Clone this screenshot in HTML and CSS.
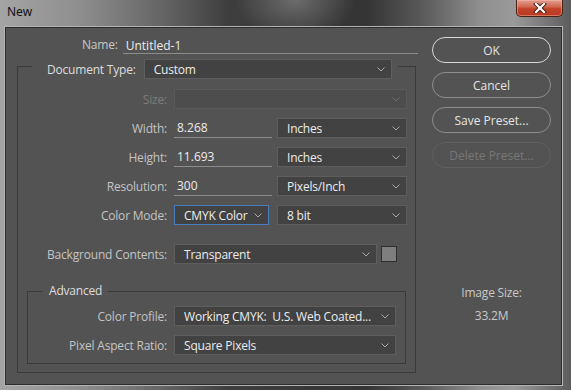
FILE: index.html
```html
<!DOCTYPE html>
<html lang="en">
<head>
    <meta charset="UTF-8">
    <meta name="viewport" content="width=device-width, initial-scale=1.0">
    <title>New</title>
    <link rel="stylesheet" href="styles.css">
</head>
<body>
    <div class="titlebar">
        <span class="title">New</span>
        <button class="close" aria-label="Close">
            <svg width="14" height="10" viewBox="0 0 14 10">
                <path d="M3 1 L11 9 M11 1 L3 9" stroke="#3a1a12" stroke-width="4" stroke-linecap="square"/>
                <path d="M3 1 L11 9 M11 1 L3 9" stroke="#ffffff" stroke-width="2.2" stroke-linecap="square"/>
            </svg>
        </button>
    </div>

    <div class="panel">
        <div class="main">
            <div class="name-row">
                <label for="name">Name:</label>
                <input type="text" id="name" value="Untitled-1">
            </div>

            <fieldset class="group">
                <legend class="group-head">
                    <span class="head-label">Document Type:</span>
                    <div class="dropdown doc-type"><span>Custom</span><svg class="chev" width="8" height="5" viewBox="0 0 8 5"><path d="M0.5 0.5 L4 4 L7.5 0.5" /></svg></div>
                </legend>

                <div class="row">
                    <span class="label disabled">Size:</span>
                    <div class="dropdown wide is-disabled"><span></span><svg class="chev" width="8" height="5" viewBox="0 0 8 5"><path d="M0.5 0.5 L4 4 L7.5 0.5" /></svg></div>
                </div>

                <div class="row">
                    <label class="label" for="width">Width:</label>
                    <input type="text" class="field" id="width" value="8.268">
                    <div class="dropdown unit"><span>Inches</span><svg class="chev" width="8" height="5" viewBox="0 0 8 5"><path d="M0.5 0.5 L4 4 L7.5 0.5" /></svg></div>
                </div>

                <div class="row">
                    <label class="label" for="height">Height:</label>
                    <input type="text" class="field" id="height" value="11.693">
                    <div class="dropdown unit"><span>Inches</span><svg class="chev" width="8" height="5" viewBox="0 0 8 5"><path d="M0.5 0.5 L4 4 L7.5 0.5" /></svg></div>
                </div>

                <div class="row">
                    <label class="label" for="resolution">Resolution:</label>
                    <input type="text" class="field" id="resolution" value="300">
                    <div class="dropdown unit"><span>Pixels/Inch</span><svg class="chev" width="8" height="5" viewBox="0 0 8 5"><path d="M0.5 0.5 L4 4 L7.5 0.5" /></svg></div>
                </div>

                <div class="row">
                    <span class="label">Color Mode:</span>
                    <div class="dropdown mode focused"><span>CMYK Color</span><svg class="chev" width="8" height="5" viewBox="0 0 8 5"><path d="M0.5 0.5 L4 4 L7.5 0.5" /></svg></div>
                    <div class="dropdown unit"><span>8 bit</span><svg class="chev" width="8" height="5" viewBox="0 0 8 5"><path d="M0.5 0.5 L4 4 L7.5 0.5" /></svg></div>
                </div>

                <div class="row row-bg">
                    <span class="label">Background Contents:</span>
                    <div class="dropdown bg"><span>Transparent</span><svg class="chev" width="8" height="5" viewBox="0 0 8 5"><path d="M0.5 0.5 L4 4 L7.5 0.5" /></svg></div>
                    <div class="swatch"></div>
                </div>

                <fieldset class="group advanced">
                    <legend class="adv-head">Advanced</legend>

                    <div class="row">
                        <span class="label">Color Profile:</span>
                        <div class="dropdown adv"><span>Working CMYK:&nbsp; U.S. Web Coated...</span><svg class="chev" width="8" height="5" viewBox="0 0 8 5"><path d="M0.5 0.5 L4 4 L7.5 0.5" /></svg></div>
                    </div>

                    <div class="row">
                        <span class="label">Pixel Aspect Ratio:</span>
                        <div class="dropdown adv"><span>Square Pixels</span><svg class="chev" width="8" height="5" viewBox="0 0 8 5"><path d="M0.5 0.5 L4 4 L7.5 0.5" /></svg></div>
                    </div>
                </fieldset>
            </fieldset>
        </div>

        <div class="side">
            <button class="btn default">OK</button>
            <button class="btn">Cancel</button>
            <button class="btn">Save Preset...</button>
            <button class="btn" disabled>Delete Preset...</button>

            <div class="image-size">
                <p>Image Size:</p>
                <p>33.2M</p>
            </div>
        </div>
    </div>
</body>
</html>
```

FILE: styles.css
```css
* {
    box-sizing: border-box;
}

body {
    margin: 0;
    width: 571px;
    height: 390px;
    overflow: hidden;
    font-family: "Open Sans", "Noto Sans", sans-serif;
    font-size: 12px;
    letter-spacing: -0.2px;
    color: #c4c4c4;
    background:
        radial-gradient(ellipse 60px 40px at 295px 0px, rgba(150, 150, 150, 0.55), rgba(150, 150, 150, 0)),
        linear-gradient(to right, #a4a4a4 0%, #8e8e8e 14%, #666666 28%, #3e3e3e 40%, #393939 50%, #343434 64%, #5a5a5a 74%, #8e8e8e 84%, #9a9a9a 90%, #5c5c5c 100%);
}

.titlebar {
    height: 26px;
    display: flex;
    justify-content: space-between;
    align-items: flex-start;
    padding: 0 8px 0 7px;
}

.title {
    color: #111111;
    font-family: "Noto Sans", sans-serif;
    font-size: 12px;
    letter-spacing: 0;
    line-height: 26px;
    margin-top: -1px;
}

.close {
    width: 47px;
    height: 17px;
    padding: 0;
    border: 1px solid #4a2118;
    border-top: none;
    border-radius: 0 0 5px 5px;
    background: linear-gradient(to bottom, #e2a093 0%, #d26a52 40%, #c2432a 55%, #b83a22 100%);
    box-shadow: inset 0 0 0 1px rgba(255, 190, 170, 0.45);
    display: flex;
    justify-content: center;
    align-items: center;
}

.panel {
    margin-left: 4px;
    width: 559px;
    height: 360px;
    background: #535353;
    border: 1px solid #b4b4b4;
    box-shadow: inset 0 0 0 1px #2c2c2c;
    display: flex;
    padding: 10px 0 0 12px;
    gap: 16px;
}

.main {
    width: 399px;
    display: flex;
    flex-direction: column;
}

.name-row {
    display: flex;
    height: 17px;
    padding-left: 65px;
}

.name-row label {
    line-height: 16px;
    margin-right: 5px;
    color: #c8c8c8;
}

.name-row input {
    flex: 1;
    height: 17px;
    margin-right: -2px;
}

input {
    font: inherit;
    color: #ececec;
    background: transparent;
    border: none;
    border-bottom: 1px solid #8c8c8c;
    padding: 0 0 0 3px;
    line-height: 16px;
    outline: none;
}

.group {
    margin: 0;
    padding: 10px 0 8px 0;
    border: 1px solid #3a3a3a;
    min-width: 0;
}

.main > .group {
    margin-top: -1px;
}

.group-head {
    margin-left: 14px;
    padding: 6px 6px 0 15px;
    display: flex;
    align-items: center;
    gap: 8px;
}

.head-label,
.adv-head {
    color: #dedede;
}

.adv-head {
    margin-left: 14px;
    padding: 0 6px 0 7px;
    line-height: 16px;
}

.row {
    display: flex;
    align-items: center;
    height: 20px;
    margin-bottom: 9px;
}

.row-bg {
    margin-top: 19px;
    margin-bottom: 19px;
}

.label {
    width: 149px;
    margin-right: 7px;
    text-align: right;
}

.label.disabled {
    color: #7c7c7c;
}

.field {
    width: 98px;
    height: 20px;
    margin-right: 5px;
}

.dropdown {
    height: 20px;
    display: flex;
    align-items: center;
    justify-content: space-between;
    background: #424242;
    border: 1px solid #5e5e5e;
    padding: 0 6px 0 9px;
    color: #ececec;
    white-space: nowrap;
}

.chev {
    flex-shrink: 0;
    fill: none;
    stroke: #a8a8a8;
    stroke-width: 1;
}

.doc-type {
    width: 248px;
    height: 20px;
}

.wide {
    width: 233px;
}

.is-disabled {
    background: #4d4d4d;
    border-color: #5a5a5a;
}

.is-disabled .chev {
    stroke: #6a6a6a;
}

.unit {
    width: 130px;
}

.mode {
    width: 95px;
    margin-right: 8px;
}

.focused {
    border-color: #4a7cc2;
}

.bg {
    width: 203px;
    margin-right: 4px;
}

.swatch {
    width: 16px;
    height: 16px;
    background: #7e7e7e;
    border: 1px solid #2e2e2e;
}

.advanced {
    margin: 0 9px;
    padding: 7px 0 8px 0;
}

.advanced .label {
    width: 139px;
}

.advanced .row:last-child {
    margin-bottom: 0;
}

.adv {
    width: 222px;
}

.side {
    width: 119px;
    display: flex;
    flex-direction: column;
    gap: 9px;
}

.btn {
    height: 26px;
    border-radius: 13px;
    border: 1px solid #8e8e8e;
    background: #535353;
    color: #e4e4e4;
    font: inherit;
    font-size: 12px;
    padding: 0;
}

.btn.default {
    border-color: #d8d8d8;
}

.btn:disabled {
    border-color: #606060;
    color: #777777;
}

.image-size {
    margin-top: 108px;
    text-align: center;
    color: #c8c8c8;
}

.image-size p {
    margin: 0 0 7px;
    line-height: 16px;
}
```
